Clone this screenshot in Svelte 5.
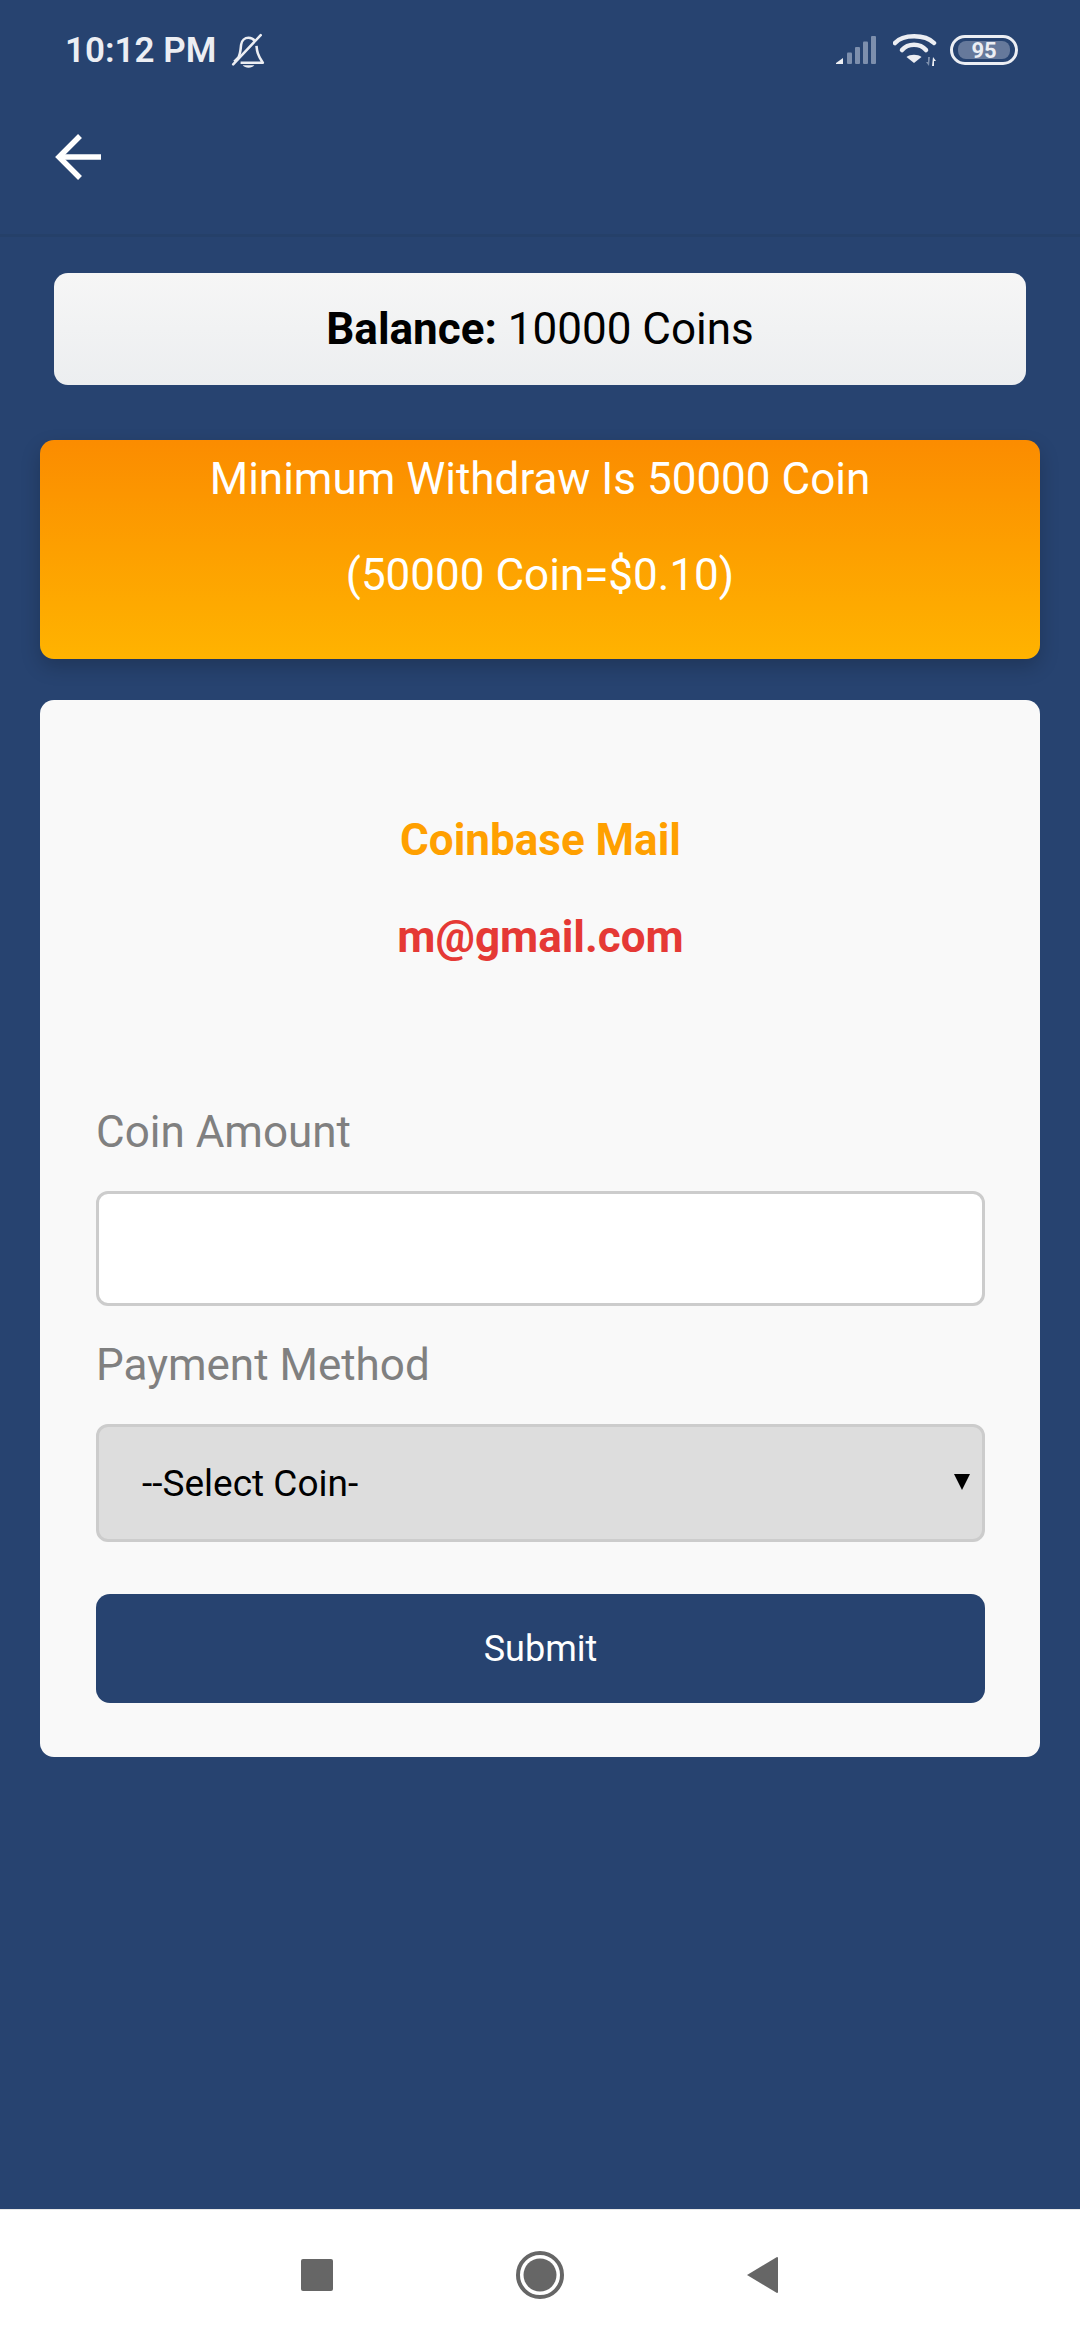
<script>
    let amount = $state('');
    let coin = $state('');
</script>

<div class="page">
    <header class="top">
        <div class="status">
            <div class="status-left">
                <span class="time">10:12 PM</span>
                <svg class="bell" width="36" height="36" viewBox="0 0 34 34" fill="none" stroke="#eceef3" stroke-width="2.4">
                    <path d="M4 28 L 8 24 C 10 20 10 16 10.500 12 C 11 8 14 5.500 17.500 5.500 C 20 5.500 22 6.500 23.500 8.500" stroke-linejoin="round"/>
                    <path d="M25 13 C 25.500 18 26 22 31 29 L 10 29" stroke-linejoin="round"/>
                    <path d="M3 30.500 L 29 3" stroke-linecap="round"/>
                    <path d="M12 31.500 H 23 C 21 34.500 14 34.500 12 31.500 Z" fill="#eceef3" stroke="none"/>
                </svg>
            </div>
            <div class="status-right">
                <svg width="42" height="30" viewBox="0 0 42 30">
                    <path d="M1 28 L 8 23 V 29 H 1 Z" fill="#eceef3"/>
                    <g fill="#7d8fad">
                        <rect x="12" y="17.500" width="5" height="11.500" rx="1"/>
                        <rect x="20" y="12" width="5" height="17" rx="1"/>
                        <rect x="28" y="6.500" width="5" height="22.500" rx="1"/>
                        <rect x="36" y="1" width="5" height="28" rx="1"/>
                    </g>
                </svg>
                <svg class="wifi" width="44" height="34" viewBox="0 0 44 34" fill="none" stroke="#eceef3" stroke-width="4.500" stroke-linecap="round">
                    <path d="M2 10 C 10 1 32 1 41 10"/>
                    <path d="M9 17 C 15 10 27 10 33 17"/>
                    <path d="M21 30 L 13.500 24 C 17 21 25 21 28.500 24 Z" fill="#eceef3" stroke="none"/>
                    <path d="M40 24 L 43 28 H 41 V 33 H 39 Z" fill="#eceef3" stroke="none"/>
                    <path d="M36 33 L 33 29 H 35 V 24 H 37 Z" fill="#7d8fad" stroke="none"/>
                </svg>
                <div class="battery"><div class="battery-fill"><span>95</span></div></div>
            </div>
        </div>
        <div class="appbar">
            <svg width="48" height="48" viewBox="0 0 48 48" fill="none" stroke="#fff" stroke-width="5.500">
                <path d="M47 24 H 5"/>
                <path d="M26 3 L 5 24 L 26 45"/>
            </svg>
        </div>
    </header>

    <main class="content">
        <div class="balance"><strong>Balance:</strong> 10000 Coins</div>

        <div class="notice">
            <p>Minimum Withdraw Is 50000 Coin</p>
            <p>(50000 Coin=$0.10)</p>
        </div>

        <form class="card">
            <div class="mail">
                <h4>Coinbase Mail</h4>
                <h4 class="address">m@gmail.com</h4>
            </div>

            <label for="amount">Coin Amount</label>
            <input id="amount" type="text" bind:value={amount} />

            <label for="method">Payment Method</label>
            <div class="select-wrap">
                <select id="method" bind:value={coin}>
                    <option value="">--Select Coin-</option>
                </select>
                <svg class="caret" width="16" height="16" viewBox="0 0 16 16"><path d="M0 0 H 16 L 8 16 Z" fill="#000"/></svg>
            </div>

            <button type="button">Submit</button>
        </form>
    </main>

    <nav class="navbar">
        <svg width="32" height="32" viewBox="0 0 32 32"><rect width="32" height="32" rx="2" fill="#666"/></svg>
        <svg width="48" height="48" viewBox="0 0 48 48">
            <circle cx="24" cy="24" r="22" fill="none" stroke="#666" stroke-width="4"/>
            <circle cx="24" cy="24" r="16.500" fill="#666"/>
        </svg>
        <svg width="31" height="38" viewBox="0 0 31 38"><path d="M0 19 L 30 1 Q 31 1 31 2 V 36 Q 31 37 30 37 Z" fill="#666"/></svg>
    </nav>
</div>

<style>
    :global(body) {
        margin: 0;
        font-family: Roboto, "Liberation Sans", sans-serif;
    }

    .page {
        display: flex;
        flex-direction: column;
        height: 2340px;
        background: #274370;
    }

    .top {
        height: 234px;
        border-bottom: 3px solid #254069;
    }

    .status {
        display: flex;
        justify-content: space-between;
        align-items: center;
        height: 100px;
        padding: 0 62px 0 65px;
    }

    .status-left,
    .status-right {
        display: flex;
        align-items: center;
    }

    .time {
        color: #eceef3;
        font-size: 35px;
        font-weight: 600;
    }

    .bell {
        margin-left: 14px;
    }

    .wifi {
        margin-left: 16px;
    }

    .battery {
        box-sizing: border-box;
        width: 68px;
        height: 30px;
        margin-left: 13px;
        padding: 3px 5px;
        border: 3px solid #eceef3;
        border-radius: 15px;
    }

    .battery-fill {
        display: flex;
        align-items: center;
        justify-content: center;
        height: 100%;
        background: #66799b;
        border-radius: 8px;
    }

    .battery-fill span {
        color: #eceef3;
        font-size: 22px;
        font-weight: 700;
    }

    .appbar {
        padding: 33px 0 0 54px;
        display: flex;
    }

    .content {
        flex: 1;
        padding: 36px 40px 0;
    }

    .balance {
        margin: 0 14px 55px;
        height: 112px;
        display: flex;
        align-items: center;
        justify-content: center;
        white-space: pre;
        background: linear-gradient(#f6f6f6, #eceef0);
        border-radius: 14px;
        font-size: 44px;
        color: #000;
    }

    .notice {
        box-sizing: border-box;
        height: 219px;
        margin-bottom: 41px;
        padding-top: 15px;
        background: linear-gradient(#fb8c00, #ffb300);
        border-radius: 14px;
        box-shadow: 0 8px 20px rgba(0, 0, 0, 0.2);
        text-align: center;
        color: #fff;
        font-size: 44px;
    }

    .notice p {
        margin: 0 0 47px;
        line-height: 49px;
    }

    .card {
        display: flex;
        flex-direction: column;
        box-sizing: border-box;
        height: 1057px;
        padding: 0 55px 0 56px;
        background: #f9f9f9;
        border-radius: 14px;
    }

    .mail {
        padding-top: 116px;
        height: 292px;
        text-align: center;
    }

    .mail h4 {
        margin: 0 0 48px;
        color: #ffa000;
        font-size: 44px;
        line-height: 49px;
        font-weight: 700;
    }

    .mail .address {
        color: #e53935;
    }

    label {
        color: #808080;
        font-size: 44px;
        line-height: 49px;
    }

    input {
        box-sizing: border-box;
        height: 115px;
        margin: 34px 0 35px;
        background: #fff;
        border: 3px solid #ccc;
        border-radius: 12px;
    }

    .select-wrap {
        position: relative;
        margin-top: 34px;
    }

    select {
        display: block;
        box-sizing: border-box;
        width: 100%;
        height: 118px;
        padding: 0 43px;
        appearance: none;
        background: #ddd;
        border: 3px solid #ccc;
        border-radius: 12px;
        color: #000;
        font-family: inherit;
        font-size: 37px;
    }

    .caret {
        position: absolute;
        right: 15px;
        top: 50px;
    }

    button {
        height: 109px;
        margin-top: 52px;
        background: #274370;
        border: 0;
        border-radius: 14px;
        color: #fff;
        font-family: inherit;
        font-size: 36px;
    }

    .navbar {
        display: flex;
        align-items: center;
        justify-content: center;
        gap: 183px;
        height: 130px;
        padding-right: 1px;
        background: #fff;
        border-top: 1px solid #e8e8e8;
    }
</style>
